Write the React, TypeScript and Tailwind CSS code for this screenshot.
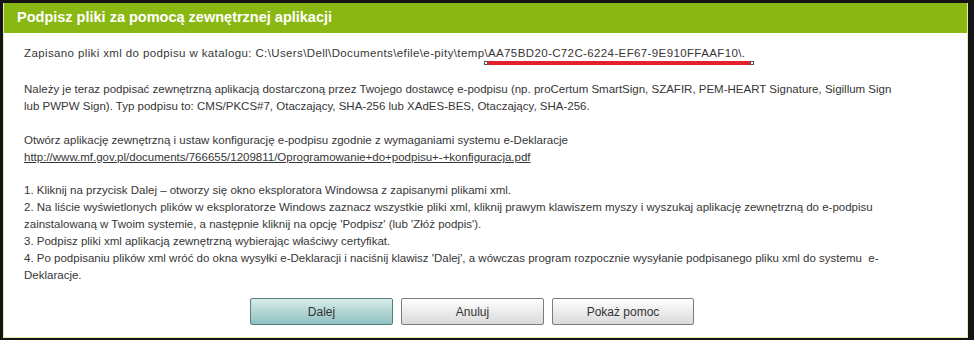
import React from "react";

const lines4 = [
  "1. Kliknij na przycisk Dalej – otworzy się okno eksploratora Windowsa z zapisanymi plikami xml.",
  "2. Na liście wyświetlonych plików w eksploratorze Windows zaznacz wszystkie pliki xml, kliknij prawym klawiszem myszy i wyszukaj aplikację zewnętrzną do e-podpisu",
  "zainstalowaną w Twoim systemie, a następnie kliknij na opcję 'Podpisz' (lub 'Złóż podpis').",
  "3. Podpisz pliki xml aplikacją zewnętrzną wybierając właściwy certyfikat.",
  "4. Po podpisaniu plików xml wróć do okna wysyłki e-Deklaracji i naciśnij klawisz 'Dalej', a wówczas program rozpocznie wysyłanie podpisanego pliku xml do systemu \u00a0e-",
  "Deklaracje.",
];

export default function App() {
  return (
    <div className="h-[340px] w-[974px] overflow-hidden bg-[#141414] pl-[3px] pt-[3px] font-['Liberation_Sans',Arial,sans-serif]">
      <div className="w-[965px] border-b border-l border-r border-[#e4efa6] bg-white">
        <div className="flex h-[30px] items-center bg-[#8ab812] pl-[13px] text-[14.5px] font-bold text-white">
          Podpisz pliki za pomocą zewnętrznej aplikacji
        </div>

        <div className="px-5 pt-[12px] text-[11.5px] leading-[17px] text-[#363636] whitespace-nowrap">
          <p className="mb-[19px] tracking-[0.38px]">
            Zapisano pliki xml do podpisu w katalogu: C:\Users\Dell\Documents\efile\e-pity\temp
            <span className="relative">
              \AA75BD20-C72C-6224-EF67-9E910FFAAF10\.
              {/* red annotation under the folder name */}
              <span className="absolute left-[2px] right-[-7px] top-[14px] h-[4px] bg-[#e3202b]" />
              <span className="absolute left-0 top-[14px] h-[4px] w-[4px] border border-[#555] bg-white" />
              <span className="absolute right-[-9px] top-[14px] h-[4px] w-[4px] border border-[#555] bg-white" />
            </span>
          </p>

          <p className="mb-[17px]">
            Należy je teraz podpisać zewnętrzną aplikacją dostarczoną przez Twojego dostawcę e-podpisu (np. proCertum SmartSign, SZAFIR, PEM-HEART Signature, Sigillum Sign
            <br />
            lub PWPW Sign). Typ podpisu to: CMS/PKCS#7, Otaczający, SHA-256 lub XAdES-BES, Otaczający, SHA-256.
          </p>

          <p className="mb-[16px]">
            Otwórz aplikację zewnętrzną i ustaw konfigurację e-podpisu zgodnie z wymaganiami systemu e-Deklaracje
            <br />
            <a className="underline text-[#363636]">
              http://www.mf.gov.pl/documents/766655/1209811/Oprogramowanie+do+podpisu+-+konfiguracja.pdf
            </a>
          </p>

          <div>
            {lines4.map((l, i) => (
              <div key={i}>{l}</div>
            ))}
          </div>
        </div>

        <div className="flex gap-2 pb-[12px] pl-[246px] pt-[14px]">
          <button className="h-[27px] w-[143px] rounded-[2px] border border-[#557f7f] bg-gradient-to-b from-[#d7ede9] to-[#8fc0c0] text-[12px] text-[#333]">
            Dalej
          </button>
          <button className="h-[27px] w-[143px] rounded-[2px] border border-[#7c7c7c] bg-gradient-to-b from-[#ffffff] to-[#d9d9d9] text-[12px] text-[#333]">
            Anuluj
          </button>
          <button className="h-[27px] w-[142px] rounded-[2px] border border-[#7c7c7c] bg-gradient-to-b from-[#ffffff] to-[#d9d9d9] text-[12px] text-[#333]">
            Pokaż pomoc
          </button>
        </div>
      </div>
      <div className="ml-[35px] mt-[2px] h-[6px] w-[898px] bg-[#2e2e2e]" />
    </div>
  );
}
